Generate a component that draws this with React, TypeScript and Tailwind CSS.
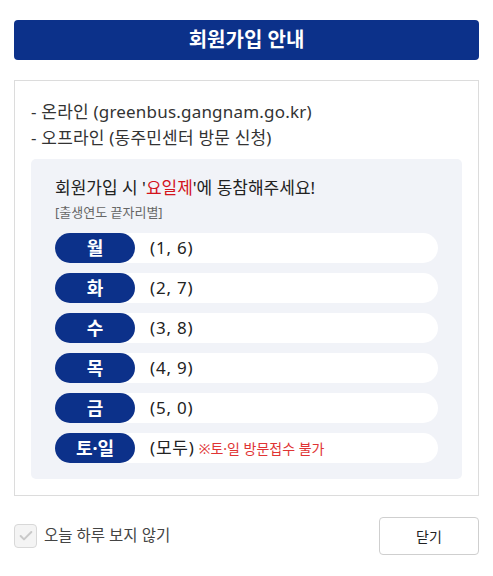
import { Check } from "lucide-react";

const days = [
  { day: "월", nums: "(1, 6)" },
  { day: "화", nums: "(2, 7)" },
  { day: "수", nums: "(3, 8)" },
  { day: "목", nums: "(4, 9)" },
  { day: "금", nums: "(5, 0)" },
  { day: "토·일", nums: "(모두)", note: "※토·일 방문접수 불가" },
];

export default function App() {
  return (
    <div
      className="min-h-[576px] w-[493px] bg-white px-[14px] pt-5"
      style={{ fontFamily: '"Noto Sans", "Noto Sans CJK KR", sans-serif' }}
    >
      <h1 className="flex h-10 items-center justify-center rounded-[4px] bg-[#0c318a] text-[20px] font-bold text-white">
        회원가입 안내
      </h1>

      <div className="mt-5 border border-[#dcdcdc] px-4 pt-[18px] pb-4">
        <ul className="text-[17px] leading-[26px] tracking-[0.2px] text-[#333]">
          <li>- 온라인 (greenbus.gangnam.go.kr)</li>
          <li>- 오프라인 (동주민센터 방문 신청)</li>
        </ul>

        <div className="mt-2 rounded-[5px] bg-[#f1f3f8] px-6 pt-4 pb-4">
          <p className="text-[17px] leading-[26px] text-[#222]">
            회원가입 시 '<span className="text-[#d3141c]">요일제</span>'에 동참해주세요!
          </p>
          <p className="text-[13px] leading-[22px] text-[#666]">[출생연도 끝자리별]</p>

          <div className="mt-[10px] flex flex-col gap-[10px]">
            {days.map((d) => (
              <div key={d.day} className="flex h-[30px] items-center rounded-full bg-white">
                <span className="flex h-[30px] w-20 items-center justify-center rounded-full bg-[#0c318a] text-[18px] font-bold text-white">
                  {d.day}
                </span>
                <span className="ml-[15px] text-[17px] tracking-[0.8px] text-[#222]">{d.nums}</span>
                {d.note && <span className="ml-[4px] text-[14px] text-[#e03434]">{d.note}</span>}
              </div>
            ))}
          </div>
        </div>
      </div>

      <div className="mt-[21px] flex items-center justify-between">
        <label className="flex items-center gap-[7px] text-[15.5px] text-[#444]">
          <span className="flex h-6 w-[23px] items-center justify-center rounded-[4px] border border-[#d8d8d8] bg-[#f4f4f4]">
            <Check size={16} strokeWidth={3} className="text-[#c9c9c9]" />
          </span>
          오늘 하루 보지 않기
        </label>
        <button
          type="button"
          className="h-[38px] w-[100px] rounded-[4px] border border-[#cfcfcf] bg-white text-[14px] text-[#222]"
        >
          닫기
        </button>
      </div>
    </div>
  );
}
